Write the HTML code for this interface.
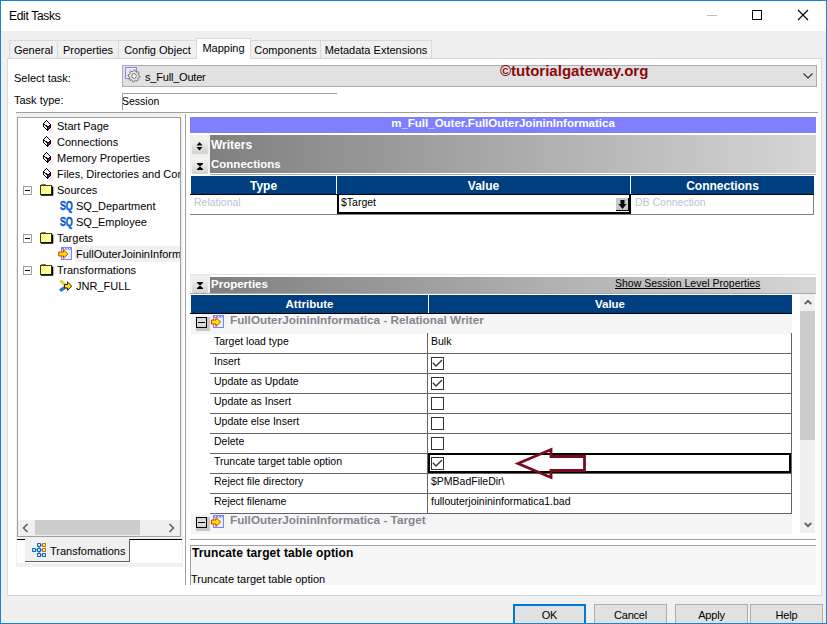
<!DOCTYPE html>
<html><head><meta charset="utf-8">
<style>
*{box-sizing:border-box;margin:0;padding:0}
html,body{width:827px;height:624px;overflow:hidden;background:#f0f0f0;font-family:"Liberation Sans",sans-serif;color:#000}
.a{position:absolute}
.t{position:absolute;white-space:nowrap;line-height:1}
.win{left:0;top:0;width:827px;height:624px;border:1px solid #1883d7}
.tab{position:absolute;top:40px;height:19px;border:1px solid #d9d9d9;border-bottom:none;background:#f0f0f0;font-size:11px;white-space:nowrap}
.tab span{position:absolute;top:3px;left:0;right:0;text-align:center}
.grid{font-size:10.5px}
.hdr{background:#003f7f;color:#fff;font-weight:bold;font-size:12px}
.row{position:absolute;left:210px;width:582px;height:20px;border-bottom:1px solid #646464;background:#fff}
.row .k{position:absolute;left:4px;top:1px;font-size:10.5px;white-space:nowrap}
.row .v{position:absolute;left:222px;top:1px;font-size:10.5px;white-space:nowrap}
.row .vl{position:absolute;left:217px;top:-1px;width:1px;height:21px;background:#646464}
.cb{position:absolute;left:221px;top:3px;width:13px;height:13px;border:1px solid #333;background:#fff}
.btn{position:absolute;top:604px;height:24px;background:#e1e1e1;border:1px solid #adadad;font-size:11px;letter-spacing:-0.2px;text-align:center;padding-top:4px}
.grad{background:linear-gradient(to right,#808080,#d6d6d6)}
.sbtn{position:absolute;left:192px;width:16px;height:16px;background:linear-gradient(#f4f4f4,#d4d2ce)}
</style></head><body>
<div class="a win"></div>
<!-- title bar -->
<div class="a" style="left:1px;top:1px;width:825px;height:30px;background:#fff"></div>
<div class="t" style="left:9px;top:10px;font-size:12px;letter-spacing:-0.3px;color:#000">Edit Tasks</div>
<div class="a" style="left:707px;top:15px;width:10px;height:1px;background:#bcbcbc"></div>
<div class="a" style="left:752px;top:10px;width:10px;height:10px;border:1px solid #000"></div>
<svg class="a" style="left:797px;top:9px" width="12" height="12" viewBox="0 0 12 12"><path d="M1 1L11 11M11 1L1 11" stroke="#000" stroke-width="1.1"/></svg>

<!-- tabs -->
<div class="tab" style="left:9px;width:49px"><span>General</span></div>
<div class="tab" style="left:57px;width:62px"><span>Properties</span></div>
<div class="tab" style="left:118px;width:79px"><span>Config Object</span></div>
<div class="tab" style="left:250px;width:71px"><span>Components</span></div>
<div class="tab" style="left:320px;width:112px"><span>Metadata Extensions</span></div>
<!-- panel -->
<div class="a" style="left:7px;top:58px;width:815px;height:538px;background:#fff;border:1px solid #d9d9d9"></div>
<div class="tab" style="left:196px;top:38px;width:55px;height:21px;background:#fff;z-index:2"><span style="top:3px">Mapping</span></div>

<!-- select task -->
<div class="t" style="left:14px;top:73px;font-size:11px">Select task:</div>
<div class="a" style="left:122px;top:65px;width:695px;height:22px;background:#e1e1e1;border:1px solid #adadad"></div>
<svg class="a" style="left:125px;top:67px" width="17" height="17" viewBox="0 0 17 17"><rect x="0.5" y="0.5" width="11" height="11" fill="#e8e8fc" stroke="#8a8af0"/><path d="M9.00 3.00 L10.17 3.12 L10.76 4.75 L11.56 5.18 L13.24 4.76 L13.99 5.67 L13.25 7.24 L13.51 8.10 L15.00 9.00 L14.88 10.17 L13.25 10.76 L12.82 11.56 L13.24 13.24 L12.33 13.99 L10.76 13.25 L9.90 13.51 L9.00 15.00 L7.83 14.88 L7.24 13.25 L6.44 12.82 L4.76 13.24 L4.01 12.33 L4.75 10.76 L4.49 9.90 L3.00 9.00 L3.12 7.83 L4.75 7.24 L5.18 6.44 L4.76 4.76 L5.67 4.01 L7.24 4.75 L8.10 4.49Z" fill="#e6e6e6" stroke="#6a6a6a" stroke-width="0.9"/><circle cx="9" cy="9" r="2.3" fill="#fff" stroke="#6a6a6a" stroke-width="0.9"/></svg>
<div class="t" style="left:145px;top:72px;font-size:11px;letter-spacing:-0.2px">s_Full_Outer</div>
<svg class="a" style="left:803px;top:73px" width="10" height="6" viewBox="0 0 10 6"><path d="M0.5 0.5L5 5L9.5 0.5" fill="none" stroke="#333" stroke-width="1.1"/></svg>
<div class="t" style="left:500px;top:63px;font-size:15px;font-weight:bold;color:#8b0a0a">©tutorialgateway.org</div>

<div class="t" style="left:14px;top:95px;font-size:11px">Task type:</div>
<div class="a" style="left:122px;top:93px;width:215px;height:1px;background:#a0a0a0"></div>
<div class="a" style="left:122px;top:93px;width:1px;height:17px;background:#a0a0a0"></div>
<div class="t" style="left:122px;top:96px;font-size:10.5px">Session</div>
<div class="a" style="left:16px;top:112px;width:802px;height:1px;background:#a0a0a0"></div>

<!-- left tree -->
<div class="a" style="left:16px;top:113px;width:167px;height:454px;background:#f0f0f0"></div>
<div class="a" style="left:17px;top:117px;width:164px;height:420px;background:#fff;border:1px solid #a0a0a0"></div>
<div class="a" style="left:18px;top:118px;width:162px;height:418px;overflow:hidden"><div class="a" style="left:-18px;top:-118px;width:300px;height:600px"><svg class="a" style="left:42px;top:119px" width="10" height="13" viewBox="0 0 10 13" shape-rendering="crispEdges"><path d="M5.5 8L8.5 5.5V8.5L5.5 11.5Z" fill="#800080"/><path d="M4.5 1.5L8.5 5.5V8.5L5.5 11.5L1.5 7.5V4.5Z" fill="none" stroke="#000" stroke-width="1"/><path d="M1.5 4.5L5.5 8V11.5M5.5 8L8.5 5.5" fill="none" stroke="#000" stroke-width="1"/></svg>
<div class="t" style="left:57px;top:121px;font-size:11px;">Start Page</div>
<svg class="a" style="left:42px;top:135px" width="10" height="13" viewBox="0 0 10 13" shape-rendering="crispEdges"><path d="M5.5 8L8.5 5.5V8.5L5.5 11.5Z" fill="#800080"/><path d="M4.5 1.5L8.5 5.5V8.5L5.5 11.5L1.5 7.5V4.5Z" fill="none" stroke="#000" stroke-width="1"/><path d="M1.5 4.5L5.5 8V11.5M5.5 8L8.5 5.5" fill="none" stroke="#000" stroke-width="1"/></svg>
<div class="t" style="left:57px;top:137px;font-size:11px;">Connections</div>
<svg class="a" style="left:42px;top:151px" width="10" height="13" viewBox="0 0 10 13" shape-rendering="crispEdges"><path d="M5.5 8L8.5 5.5V8.5L5.5 11.5Z" fill="#800080"/><path d="M4.5 1.5L8.5 5.5V8.5L5.5 11.5L1.5 7.5V4.5Z" fill="none" stroke="#000" stroke-width="1"/><path d="M1.5 4.5L5.5 8V11.5M5.5 8L8.5 5.5" fill="none" stroke="#000" stroke-width="1"/></svg>
<div class="t" style="left:57px;top:153px;font-size:11px;">Memory Properties</div>
<svg class="a" style="left:42px;top:167px" width="10" height="13" viewBox="0 0 10 13" shape-rendering="crispEdges"><path d="M5.5 8L8.5 5.5V8.5L5.5 11.5Z" fill="#800080"/><path d="M4.5 1.5L8.5 5.5V8.5L5.5 11.5L1.5 7.5V4.5Z" fill="none" stroke="#000" stroke-width="1"/><path d="M1.5 4.5L5.5 8V11.5M5.5 8L8.5 5.5" fill="none" stroke="#000" stroke-width="1"/></svg>
<div class="t" style="left:57px;top:169px;font-size:11px;">Files, Directories and Com</div>
<div class="a" style="left:23px;top:186px;width:9px;height:9px;border:1px solid #a0a0a0;background:#fff"></div><div class="a" style="left:25px;top:190px;width:5px;height:1px;background:#000"></div>
<svg class="a" style="left:40px;top:184px" width="14" height="12" viewBox="0 0 14 12"><defs><pattern id="chk" width="2" height="2" patternUnits="userSpaceOnUse"><rect width="2" height="2" fill="#ffff40"/><rect width="1" height="1" fill="#fffff0"/><rect x="1" y="1" width="1" height="1" fill="#fffff0"/></pattern></defs><path d="M0.5 1.5L1.5 0.5H5.5L6.5 1.5Z" fill="#e8e8e8" stroke="#707070"/><rect x="0.5" y="1.5" width="11" height="9" fill="url(#chk)" stroke="#404000"/><path d="M1 11H12.5V2.5" fill="none" stroke="#000" stroke-width="1.6"/></svg>
<div class="t" style="left:57px;top:185px;font-size:11px;">Sources</div>
<div class="t" style="left:60px;top:200px;font-size:12px;font-weight:bold;color:#0a5fd0;letter-spacing:-0.3px;-webkit-text-stroke:0.5px #0a5fd0;transform:scaleX(0.75);transform-origin:0 0">SQ</div>
<div class="t" style="left:76px;top:201px;font-size:11px;">SQ_Department</div>
<div class="t" style="left:60px;top:216px;font-size:12px;font-weight:bold;color:#0a5fd0;letter-spacing:-0.3px;-webkit-text-stroke:0.5px #0a5fd0;transform:scaleX(0.75);transform-origin:0 0">SQ</div>
<div class="t" style="left:76px;top:217px;font-size:11px;">SQ_Employee</div>
<div class="a" style="left:23px;top:234px;width:9px;height:9px;border:1px solid #a0a0a0;background:#fff"></div><div class="a" style="left:25px;top:238px;width:5px;height:1px;background:#000"></div>
<svg class="a" style="left:40px;top:232px" width="14" height="12" viewBox="0 0 14 12"><defs><pattern id="chk" width="2" height="2" patternUnits="userSpaceOnUse"><rect width="2" height="2" fill="#ffff40"/><rect width="1" height="1" fill="#fffff0"/><rect x="1" y="1" width="1" height="1" fill="#fffff0"/></pattern></defs><path d="M0.5 1.5L1.5 0.5H5.5L6.5 1.5Z" fill="#e8e8e8" stroke="#707070"/><rect x="0.5" y="1.5" width="11" height="9" fill="url(#chk)" stroke="#404000"/><path d="M1 11H12.5V2.5" fill="none" stroke="#000" stroke-width="1.6"/></svg>
<div class="t" style="left:57px;top:233px;font-size:11px;">Targets</div>
<div class="a" style="left:75px;top:246px;width:106px;height:16px;background:#f0f0f0"></div>
<svg class="a" style="left:58px;top:247px" width="14" height="14" viewBox="0 0 14 14"><rect x="3.5" y="0.5" width="10" height="12" fill="#e0f4fa" stroke="#8080ff"/><path d="M3.5 0.5H13.5V2.5H3.5Z" fill="#8080ff"/><path d="M6 1.5H7M8.5 1.5H9.5M11 1.5H12" stroke="#fff"/><path d="M0.8 5H5.5V2.8L9.8 7L5.5 11.2V9H0.8Z" fill="#ffe800" stroke="#e03000"/></svg>
<div class="t" style="left:76px;top:249px;font-size:11px;">FullOuterJoininInform</div>
<div class="a" style="left:23px;top:266px;width:9px;height:9px;border:1px solid #a0a0a0;background:#fff"></div><div class="a" style="left:25px;top:270px;width:5px;height:1px;background:#000"></div>
<svg class="a" style="left:40px;top:264px" width="14" height="12" viewBox="0 0 14 12"><defs><pattern id="chk" width="2" height="2" patternUnits="userSpaceOnUse"><rect width="2" height="2" fill="#ffff40"/><rect width="1" height="1" fill="#fffff0"/><rect x="1" y="1" width="1" height="1" fill="#fffff0"/></pattern></defs><path d="M0.5 1.5L1.5 0.5H5.5L6.5 1.5Z" fill="#e8e8e8" stroke="#707070"/><rect x="0.5" y="1.5" width="11" height="9" fill="url(#chk)" stroke="#404000"/><path d="M1 11H12.5V2.5" fill="none" stroke="#000" stroke-width="1.6"/></svg>
<div class="t" style="left:57px;top:265px;font-size:11px;">Transformations</div>
<svg class="a" style="left:59px;top:280px" width="14" height="13" viewBox="0 0 14 13"><path d="M0.5 9.5L6 6L7.5 8L2 11.5Z" fill="#1e7fe0" stroke="#0050b0" stroke-width="0.6"/><path d="M1 1.5L2.5 0.2L7.5 5L6 6.5Z" fill="#ffe000" stroke="#b09000" stroke-width="0.6"/><path d="M5.5 4.5H8.5V2L12.8 6.2L8.5 10.3V8H5.5Z" fill="#ffe800" stroke="#202020" stroke-width="1"/></svg>
<div class="t" style="left:76px;top:281px;font-size:11px;">JNR_FULL</div>
<div class="a" style="left:18px;top:520px;width:163px;height:16px;background:#f0f0f0"></div>
<div class="a" style="left:35px;top:520px;width:105px;height:15px;background:#cdcdcd"></div>
<svg class="a" style="left:22px;top:523px" width="7" height="10" viewBox="0 0 7 10"><path d="M5.5 1L1.5 5L5.5 9" fill="none" stroke="#606060" stroke-width="1.6"/></svg>
<svg class="a" style="left:168px;top:523px" width="7" height="10" viewBox="0 0 7 10"><path d="M1.5 1L5.5 5L1.5 9" fill="none" stroke="#606060" stroke-width="1.6"/></svg></div></div><div class="a" style="left:17px;top:539px;width:165px;height:24px;background:#fff"></div>
<div class="a" style="left:17px;top:539px;width:165px;height:1px;background:#000"></div>
<div class="a" style="left:25px;top:539px;width:105px;height:23px;background:#f0f0f0;border-right:1px solid #606060;border-bottom:1px solid #606060"></div>
<svg class="a" style="left:32px;top:543px" width="15" height="15" viewBox="0 0 15 15"><path d="M4 7H5M7 4V5M7 9V10M9 2H10M9 7H10M9 12H10" stroke="#444"/><rect x="5" y="0" width="4" height="4" rx="0.8" fill="#0a64d0"/><rect x="6" y="1" width="2" height="2" fill="#b8f4ff"/><rect x="10" y="0" width="4" height="4" rx="0.8" fill="#c07010"/><rect x="11" y="1" width="2" height="2" fill="#fff060"/><rect x="0" y="5" width="4" height="4" rx="0.8" fill="#0a64d0"/><rect x="1" y="6" width="2" height="2" fill="#b8f4ff"/><rect x="5" y="5" width="4" height="4" rx="0.8" fill="#0a64d0"/><rect x="6" y="6" width="2" height="2" fill="#b8f4ff"/><rect x="10" y="5" width="4" height="4" rx="0.8" fill="#c07010"/><rect x="11" y="6" width="2" height="2" fill="#fff060"/><rect x="5" y="10" width="4" height="4" rx="0.8" fill="#0a64d0"/><rect x="6" y="11" width="2" height="2" fill="#b8f4ff"/><rect x="10" y="10" width="4" height="4" rx="0.8" fill="#0a64d0"/><rect x="11" y="11" width="2" height="2" fill="#b8f4ff"/></svg>
<div class="t" style="left:50px;top:546px;font-size:11px;">Transfomations</div>

<!-- splitter -->
<div class="a" style="left:185px;top:114px;width:1px;height:471px;background:#a0a0a0"></div>

<!-- right side -->
<div class="a" style="left:190px;top:117px;width:626px;height:16px;background:#8080ff"></div>
<div class="t" style="left:190px;width:626px;text-align:center;top:118px;font-size:11.5px;font-weight:bold;color:#fff">m_Full_Outer.FullOuterJoininInformatica</div>

<div class="a" style="left:190px;top:135px;width:20px;height:39px;background:#f0f0f0"></div>
<div class="a grad" style="left:210px;top:135px;width:606px;height:38px"></div>
<div class="a" style="left:210px;top:174px;width:606px;height:1px;background:#a8a8a8"></div>
<div class="sbtn" style="top:138px"></div>
<div class="sbtn" style="top:158px"></div>
<svg class="a" style="left:196px;top:142px" width="7" height="9" viewBox="0 0 7 9"><path d="M3.5 0L6.5 3.5H0.5Z M0.5 5H6.5L3.5 8.5Z" fill="#000"/></svg>
<svg class="a" style="left:197px;top:163px" width="6" height="7" viewBox="0 0 6 7"><path d="M0 0H6V1L3 3.5L0 1Z M3 3.5L6 6V7H0V6Z" fill="#000"/></svg>
<div class="t" style="left:211px;top:139px;font-size:12px;font-weight:bold;color:#fff">Writers</div>
<div class="t" style="left:211px;top:159px;font-size:11.5px;font-weight:bold;color:#fff">Connections</div>

<div class="a hdr" style="left:191px;top:176px;width:623px;height:18px"></div>
<div class="a" style="left:190px;top:194px;width:624px;height:1px;background:#000"></div>
<div class="a" style="left:336px;top:176px;width:1px;height:18px;background:#fff"></div>
<div class="a" style="left:630px;top:176px;width:1px;height:18px;background:#fff"></div>
<div class="t" style="left:191px;width:145px;text-align:center;top:180px;font-size:12px;font-weight:bold;color:#fff">Type</div>
<div class="t" style="left:337px;width:293px;text-align:center;top:180px;font-size:12px;font-weight:bold;color:#fff">Value</div>
<div class="t" style="left:631px;width:183px;text-align:center;top:180px;font-size:12px;font-weight:bold;color:#fff">Connections</div>
<div class="a" style="left:190px;top:195px;width:624px;height:20px;background:#fff;border-bottom:1px solid #808080;border-right:1px solid #808080"></div>
<div class="t" style="left:194px;top:197px;font-size:10.5px;color:#b8c4d4">Relational</div>
<div class="a" style="left:337px;top:194px;width:294px;height:20px;border:2px solid #000;border-top-width:1px;background:#fff"></div>
<div class="t" style="left:341px;top:197px;font-size:10.5px">$Target</div>
<div class="a" style="left:616px;top:198px;width:13px;height:13px;background:#c8c8c8;border-right:1px solid #000;border-bottom:1px solid #000"></div>
<svg class="a" style="left:617px;top:199px" width="11" height="11" viewBox="0 0 11 11"><path d="M3.5 1H7.5V5H9.5L5.5 10L1.5 5H3.5Z" fill="#000"/></svg>
<div class="t" style="left:635px;top:197px;font-size:10.5px;color:#b8c4d4">DB Connection</div>

<!-- properties -->
<div class="a" style="left:190px;top:274px;width:626px;height:1px;background:#e4e4e4"></div>
<div class="a" style="left:190px;top:275px;width:20px;height:19px;background:#f0f0f0"></div>
<div class="a grad" style="left:210px;top:277px;width:606px;height:16px"></div>
<div class="a" style="left:190px;top:293px;width:626px;height:1px;background:#a8a8a8"></div>
<div class="sbtn" style="top:277px"></div>
<svg class="a" style="left:197px;top:282px" width="6" height="7" viewBox="0 0 6 7"><path d="M0 0H6V1L3 3.5L0 1Z M3 3.5L6 6V7H0V6Z" fill="#000"/></svg>
<div class="t" style="left:211px;top:279px;font-size:11.5px;font-weight:bold;color:#fff">Properties</div>
<div class="t" style="left:615px;top:278px;font-size:10.5px;color:#000;text-decoration:underline">Show Session Level Properties</div>

<div class="a hdr" style="left:191px;top:295px;width:601px;height:18px"></div>
<div class="a" style="left:190px;top:313px;width:602px;height:1px;background:#000"></div>
<div class="a" style="left:428px;top:295px;width:1px;height:18px;background:#fff"></div>
<div class="t" style="left:191px;width:237px;text-align:center;top:299px;font-size:11.5px;font-weight:bold;color:#fff">Attribute</div>
<div class="t" style="left:429px;width:362px;text-align:center;top:299px;font-size:11.5px;font-weight:bold;color:#fff">Value</div>

<!-- scrollbar -->
<div class="a" style="left:800px;top:294px;width:15px;height:239px;background:#f0f0f0"></div>
<div class="a" style="left:800px;top:311px;width:15px;height:129px;background:#cdcdcd"></div>
<svg class="a" style="left:804px;top:299px" width="8" height="6" viewBox="0 0 8 6"><path d="M0.8 5L4 1.8L7.2 5" fill="none" stroke="#606060" stroke-width="1.8"/></svg>
<svg class="a" style="left:804px;top:522px" width="8" height="6" viewBox="0 0 8 6"><path d="M0.8 1L4 4.2L7.2 1" fill="none" stroke="#606060" stroke-width="1.8"/></svg>

<div class="a" style="left:191px;top:314px;width:601px;height:20px;background:#f5f5f5"></div>
<div class="a" style="left:196px;top:317px;width:14px;height:14px;background:#c8c8c8"></div>
<div class="a" style="left:196px;top:317px;width:11px;height:11px;border:1px solid #000;background:linear-gradient(#d0d0d0,#e4e4e4 50%,#d0d0d0)"></div>
<div class="a" style="left:198px;top:322px;width:7px;height:1px;background:#000"></div>
<svg class="a" style="left:211px;top:315px" width="14" height="14" viewBox="0 0 14 14"><rect x="2.5" y="0.5" width="10" height="12" fill="#e0f4fa" stroke="#8080ff"/><path d="M2.5 0.5H12.5V2.5H2.5Z" fill="#8080ff"/><path d="M4 1.5H5M7 1.5H8M10 1.5H11" stroke="#fff"/><path d="M0.5 5H5V2.5L9.5 7L5 11.5V9H0.5Z" fill="#ffe800" stroke="#e03000"/></svg>
<div class="t" style="left:230px;top:314px;font-size:11.75px;font-weight:bold;color:#858590">FullOuterJoininInformatica - Relational Writer</div>
<div class="row" style="top:334px"><div class="k">Target load type</div><div class="vl"></div><div class="v" style="left:221px">Bulk</div></div>
<div class="row" style="top:354px"><div class="k">Insert</div><div class="vl"></div><div class="cb"><svg class="a" style="left:0px;top:0px" width="11" height="11" viewBox="0 0 11 11"><path d="M0.8 4.8L4 8L10 2" fill="none" stroke="#333" stroke-width="1.3"/></svg></div></div>
<div class="row" style="top:374px"><div class="k">Update as Update</div><div class="vl"></div><div class="cb"><svg class="a" style="left:0px;top:0px" width="11" height="11" viewBox="0 0 11 11"><path d="M0.8 4.8L4 8L10 2" fill="none" stroke="#333" stroke-width="1.3"/></svg></div></div>
<div class="row" style="top:394px"><div class="k">Update as Insert</div><div class="vl"></div><div class="cb"></div></div>
<div class="row" style="top:414px"><div class="k">Update else Insert</div><div class="vl"></div><div class="cb"></div></div>
<div class="row" style="top:434px"><div class="k">Delete</div><div class="vl"></div><div class="cb"></div></div>
<div class="row" style="top:454px"><div class="k">Truncate target table option</div><div class="vl"></div><div class="cb"><svg class="a" style="left:0px;top:0px" width="11" height="11" viewBox="0 0 11 11"><path d="M0.8 4.8L4 8L10 2" fill="none" stroke="#333" stroke-width="1.3"/></svg></div></div>
<div class="row" style="top:474px"><div class="k">Reject file directory</div><div class="vl"></div><div class="v" style="left:221px">$PMBadFileDir\</div></div>
<div class="row" style="top:494px"><div class="k">Reject filename</div><div class="vl"></div><div class="v" style="left:221px">fullouterjoinininformatica1.bad</div></div>
<div class="a" style="left:791px;top:333px;width:1px;height:181px;background:#646464"></div>
<div class="a" style="left:428px;top:453px;width:363px;height:20px;border:2px solid #000"></div>
<div class="a" style="left:431px;top:457px;width:13px;height:13px;border:1px solid #333;background:#fff"><svg class="a" style="left:0px;top:0px" width="11" height="11" viewBox="0 0 11 11"><path d="M0.8 4.8L4 8L10 2" fill="none" stroke="#333" stroke-width="1.3"/></svg></div>
<div class="a" style="left:191px;top:514px;width:601px;height:20px;background:#f5f5f5"></div>
<div class="a" style="left:196px;top:517px;width:14px;height:14px;background:#c8c8c8"></div>
<div class="a" style="left:196px;top:517px;width:11px;height:11px;border:1px solid #000;background:linear-gradient(#d0d0d0,#e4e4e4 50%,#d0d0d0)"></div>
<div class="a" style="left:198px;top:522px;width:7px;height:1px;background:#000"></div>
<svg class="a" style="left:211px;top:515px" width="14" height="14" viewBox="0 0 14 14"><rect x="2.5" y="0.5" width="10" height="12" fill="#e0f4fa" stroke="#8080ff"/><path d="M2.5 0.5H12.5V2.5H2.5Z" fill="#8080ff"/><path d="M4 1.5H5M7 1.5H8M10 1.5H11" stroke="#fff"/><path d="M0.5 5H5V2.5L9.5 7L5 11.5V9H0.5Z" fill="#ffe800" stroke="#e03000"/></svg>
<div class="t" style="left:230px;top:514px;font-size:11.75px;font-weight:bold;color:#858590">FullOuterJoininInformatica - Target</div>
<svg class="a" style="left:510px;top:445px" width="80" height="40" viewBox="510 445 80 40"><path d="M518 463.5L551 449.5V456.5H584.5V470.5H551V477.5Z" fill="none" stroke="#7d0a1c" stroke-width="2.8" stroke-linejoin="miter"/></svg>

<!-- description -->
<div class="a" style="left:190px;top:539px;width:626px;height:1px;background:#a0a0a0"></div>
<div class="a" style="left:190px;top:545px;width:626px;height:40px;background:#f7f7f7;border-top:1px solid #a0a0a0;border-left:1px solid #a0a0a0"></div>
<div class="t" style="left:192px;top:547px;font-size:12px;font-weight:bold;letter-spacing:0.12px">Truncate target table option</div>
<div class="t" style="left:191px;top:574px;font-size:11px">Truncate target table option</div>

<!-- buttons -->
<div class="btn" style="left:513px;width:73px;border:2px solid #0078d7;padding-top:3px">OK</div>
<div class="btn" style="left:594px;width:73px">Cancel</div>
<div class="btn" style="left:675px;width:73px">Apply</div>
<div class="btn" style="left:750px;width:73px">Help</div>
<div class="a" style="left:0;top:623px;width:827px;height:1px;background:#1883d7"></div>
<div class="a" style="left:826px;top:0;width:1px;height:624px;background:#1883d7"></div>
</body></html>
